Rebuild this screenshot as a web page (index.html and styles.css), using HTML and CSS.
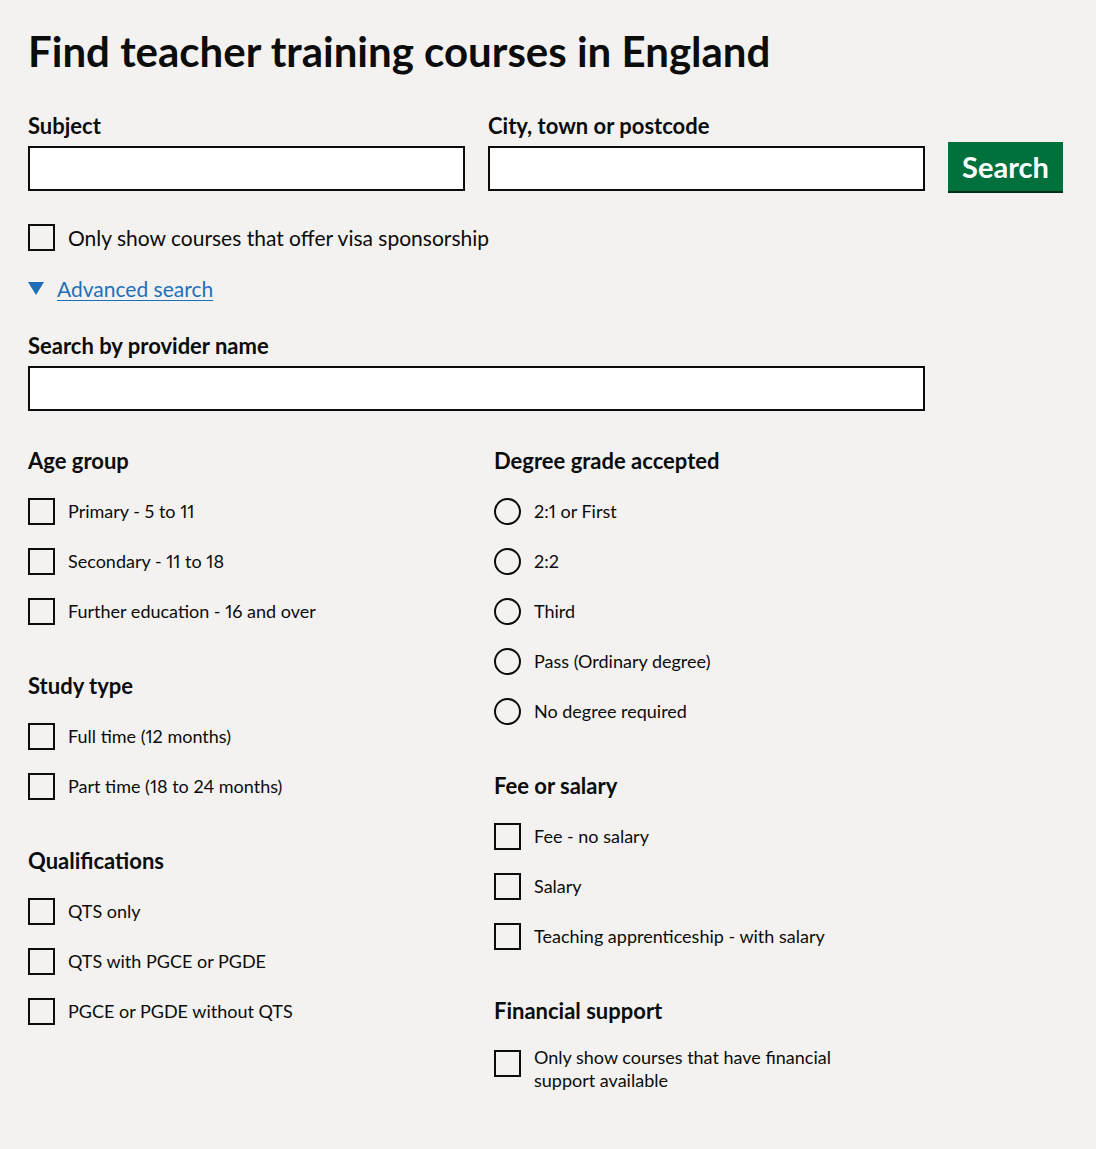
FILE: index.html
```html
<!DOCTYPE html>
<html lang="en">
<head>
<meta charset="utf-8">
<title>Find teacher training courses in England</title>
<link rel="stylesheet" href="styles.css">
</head>
<body>
<main class="page">
  <h1 class="title">Find teacher training courses in England</h1>
  <form class="search" action="#">
    <div class="search-row">
      <div class="field">
        <label class="field-label" for="subject">Subject</label>
        <input class="text-input" id="subject" type="text">
      </div>
      <div class="field">
        <label class="field-label" for="location">City, town or postcode</label>
        <input class="text-input" id="location" type="text">
      </div>
      <button class="button" type="button">Search</button>
    </div>

    <label class="option option--large">
      <input class="box" type="checkbox">
      <span>Only show courses that offer visa sponsorship</span>
    </label>

    <div class="advanced">
      <span class="triangle"></span>
      <a class="link" href="#">Advanced search</a>
    </div>

    <div class="field field--wide">
      <label class="field-label" for="provider">Search by provider name</label>
      <input class="text-input" id="provider" type="text">
    </div>

    <div class="filters">
      <div class="column">
        <div class="group">
          <h2 class="group-heading">Age group</h2>
          <label class="option"><input class="box" type="checkbox"><span>Primary - 5 to 11</span></label>
          <label class="option"><input class="box" type="checkbox"><span>Secondary - 11 to 18</span></label>
          <label class="option"><input class="box" type="checkbox"><span>Further education - 16 and over</span></label>
        </div>
        <div class="group">
          <h2 class="group-heading">Study type</h2>
          <label class="option"><input class="box" type="checkbox"><span>Full time (12 months)</span></label>
          <label class="option"><input class="box" type="checkbox"><span>Part time (18 to 24 months)</span></label>
        </div>
        <div class="group">
          <h2 class="group-heading">Qualifications</h2>
          <label class="option"><input class="box" type="checkbox"><span>QTS only</span></label>
          <label class="option"><input class="box" type="checkbox"><span>QTS with PGCE or PGDE</span></label>
          <label class="option"><input class="box" type="checkbox"><span>PGCE or PGDE without QTS</span></label>
        </div>
      </div>
      <div class="column">
        <div class="group">
          <h2 class="group-heading">Degree grade accepted</h2>
          <label class="option"><input class="box box--radio" type="radio" name="degree"><span>2:1 or First</span></label>
          <label class="option"><input class="box box--radio" type="radio" name="degree"><span>2:2</span></label>
          <label class="option"><input class="box box--radio" type="radio" name="degree"><span>Third</span></label>
          <label class="option"><input class="box box--radio" type="radio" name="degree"><span>Pass (Ordinary degree)</span></label>
          <label class="option"><input class="box box--radio" type="radio" name="degree"><span>No degree required</span></label>
        </div>
        <div class="group">
          <h2 class="group-heading">Fee or salary</h2>
          <label class="option"><input class="box" type="checkbox"><span>Fee - no salary</span></label>
          <label class="option"><input class="box" type="checkbox"><span>Salary</span></label>
          <label class="option"><input class="box" type="checkbox"><span>Teaching apprenticeship - with salary</span></label>
        </div>
        <div class="group">
          <h2 class="group-heading">Financial support</h2>
          <label class="option option--multi"><input class="box" type="checkbox"><span class="multi-text">Only show courses that have financial support available</span></label>
        </div>
      </div>
    </div>
  </form>
</main>
</body>
</html>
```

FILE: styles.css
```css
* {
  box-sizing: border-box;
}

html,
body {
  margin: 0;
  background: #f3f2f1;
}

body {
  color: #0b0c0c;
  font-family: Lato, "Liberation Sans", Arial, sans-serif;
  font-variant-numeric: proportional-nums;
  min-height: 1149px;
}

.page {
  padding: 27px 28px 40px;
}

.title {
  margin: 0;
  font-size: 42px;
  line-height: 49px;
  font-weight: 700;
}

.search {
  margin: 0;
}

.search-row {
  display: flex;
  align-items: flex-end;
  gap: 23px;
  margin-top: 37px;
}

.field {
  display: flex;
  flex-direction: column;
  gap: 8px;
  width: 437px;
}

.field--wide {
  width: 897px;
  margin-top: 32px;
}

.field-label {
  font-size: 22px;
  line-height: 25px;
  font-weight: 700;
}

.text-input {
  display: block;
  width: 100%;
  height: 45px;
  margin: 0;
  padding: 0 8px;
  border: 2px solid #0b0c0c;
  border-radius: 0;
  background: #fff;
  font: inherit;
}

.button {
  width: 115px;
  height: 49px;
  margin: 0;
  padding: 0;
  border: 0;
  border-radius: 0;
  background: #00703c;
  box-shadow: 0 2px 0 #002d18;
  color: #fff;
  font-family: inherit;
  font-size: 29px;
  font-weight: 700;
  line-height: 1;
}

.option {
  display: flex;
  align-items: center;
  gap: 13px;
  height: 50px;
  font-size: 18px;
  line-height: 23px;
}

.option--large {
  height: auto;
  margin-top: 33px;
  font-size: 21px;
  line-height: 25px;
}

.option--multi {
  align-items: flex-start;
  height: auto;
  padding-top: 10px;
}

.option--multi .box {
  margin-top: 4px;
}

.multi-text {
  max-width: 300px;
}

.box {
  flex: none;
  width: 27px;
  height: 27px;
  margin: 0;
  border: 2px solid #0b0c0c;
  border-radius: 0;
  background: transparent;
  -webkit-appearance: none;
  appearance: none;
}

.box--radio {
  border-radius: 50%;
}

.advanced {
  display: flex;
  align-items: center;
  gap: 13px;
  margin-top: 25px;
  font-size: 21px;
  line-height: 25px;
}

.triangle {
  flex: none;
  width: 0;
  height: 0;
  border-left: 8px solid transparent;
  border-right: 8px solid transparent;
  border-top: 13px solid #1d70b8;
}

.link {
  color: #1d70b8;
  text-decoration: underline;
  text-decoration-thickness: 1px;
  text-underline-offset: 3px;
}

.filters {
  display: grid;
  grid-template-columns: 466px 1fr;
  margin-top: 25px;
}

.column {
  display: flex;
  flex-direction: column;
  gap: 25px;
}

.group-heading {
  margin: 0;
  height: 50px;
  font-size: 22px;
  line-height: 50px;
  font-weight: 700;
}
```
